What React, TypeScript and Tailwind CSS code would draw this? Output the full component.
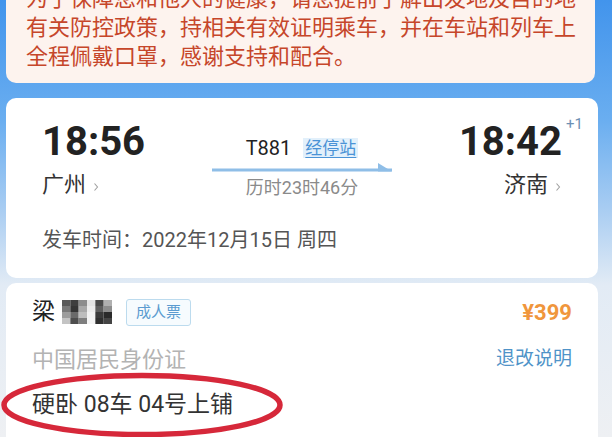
import React from 'react';

const font = { fontFamily: 'Roboto, "Noto Sans CJK SC", sans-serif' };

// pixelated name cover
const mosaic = [
  ['#5a5a5a', '#3e3e3e', '#8c8c8c', '#e4e4e4', '#4a4a4a', '#b0b0b0'],
  ['#7a7a7a', '#353535', '#a8a8a8', '#ececec', '#5e5e5e', '#8d8d8d'],
  ['#9d9d9d', '#6a6a6a', '#bdbdbd', '#f2f2f2', '#3a3a3a', '#2a2a2a'],
  ['#c4c4c4', '#4e4e4e', '#7e7e7e', '#f4f4f4', '#2f2f2f', '#444444'],
];

const Mosaic: React.FC = () => (
  <svg width="50" height="24" viewBox="0 0 48 24" preserveAspectRatio="none" className="shrink-0">
    {mosaic.map((row, r) =>
      row.map((c, i) => <rect key={`${r}-${i}`} x={i * 8} y={r * 6} width="8" height="6" fill={c} />)
    )}
  </svg>
);

const Chevron: React.FC = () => (
  <svg width="8" height="12" viewBox="0 0 8 12" className="ml-[6px] mt-[4px]">
    <path d="M2.5 2.5 L5.5 6 L2.5 9.5" fill="none" stroke="#a0a0a0" strokeWidth="1.1" />
  </svg>
);

const App: React.FC = () => {
  return (
    <div
      className="w-[612px] h-[437px] overflow-hidden bg-[linear-gradient(to_bottom,#4294ec_0px,#6aaef0_120px,#a9cdf2_210px,#e2ebf5_285px,#eef0f3_437px)]"
      style={font}
    >
      {/* notice */}
      <div className="ml-[6px] mr-[17px] -mt-[30px] pt-[14px] pb-[12px] pl-[20px] pr-3 rounded-[10px] bg-[#fdf3ee] text-[22px] leading-[29px] text-[#c6462a]">
        <p className="whitespace-nowrap">为了保障您和他人的健康，请您提前了解出发地及目的地</p>
        <p className="whitespace-nowrap">有关防控政策，持相关有效证明乘车，并在车站和列车上</p>
        <p>全程佩戴口罩，感谢支持和配合。</p>
      </div>

      {/* train */}
      <div className="ml-[6px] mr-[14px] mt-[15px] rounded-[10px] bg-white px-[36px] pt-[24px] pb-[24px]">
        <div className="flex justify-between">
          <div className="flex flex-col">
            <div className="text-[40px] leading-[40px] font-bold text-[#222]">18:56</div>
            <div className="mt-[9px] flex items-center text-[22px] leading-[28px] text-[#333]">
              广州
              <Chevron />
            </div>
          </div>

          <div className="mt-[14px] flex flex-col items-center">
            <div className="flex items-center h-6">
              <span className="text-[20px] text-[#222]">T881</span>
              <span className="ml-[12px] px-[2px] bg-[#e2f0fb] text-[17px] leading-[20px] text-[#4a93d6] underline underline-offset-[3px]">
                经停站
              </span>
            </div>
            <svg width="180" height="16" viewBox="0 0 180 16">
              <rect x="0" y="8.5" width="180" height="3" fill="#8fbee7" />
              <polygon points="166,3 180,11.5 166,11.5" fill="#8fbee7" />
            </svg>
            <div className="h-6 text-[18px] leading-6 text-[#8a8a8a]">历时23时46分</div>
          </div>

          <div className="flex flex-col items-end">
            <div className="relative text-[40px] leading-[40px] font-bold text-[#222]">
              18:42
              <span className="absolute -right-[21px] -top-[6px] text-[15px] leading-[16px] font-normal text-[#6d8fb3]">+1</span>
            </div>
            <div className="mt-[9px] flex items-center text-[22px] leading-[28px] text-[#333]">
              济南
              <Chevron />
            </div>
          </div>
        </div>
        <div className="mt-[26px] text-[20px] leading-[28px] text-[#555]">发车时间：2022年12月15日 周四</div>
      </div>

      {/* passenger */}
      <div className="relative ml-[6px] mr-[14px] mt-[5px] h-[200px] rounded-t-[10px] bg-white pl-[26px] pr-[26px] pt-[13px]">
        <div className="flex items-center justify-between h-8">
          <div className="flex items-center">
            <span className="text-[23px] text-[#222]">梁</span>
            <span className="ml-[7px]">
              <Mosaic />
            </span>
            <span className="ml-[14px] h-[27px] px-[9px] flex items-center rounded-[3px] border border-[#bcdbee] bg-[#f6fbfe] text-[15px] text-[#5b9bd0]">
              成人票
            </span>
          </div>
          <span className="text-[22px] font-bold text-[#f0963c]">¥399</span>
        </div>
        <div className="mt-[15px] flex items-center justify-between h-8">
          <span className="text-[22px] text-[#b3b3b3]">中国居民身份证</span>
          <span className="text-[19px] text-[#4f93c8]">退改说明</span>
        </div>
        <div className="mt-[14px] h-8 flex items-center text-[23px] text-[#333]">硬卧 08车 04号上铺</div>

        <svg
          className="absolute -left-[6px] top-[89px]"
          width="286"
          height="66"
          viewBox="0 0 286 66"
        >
          <ellipse cx="142" cy="33" rx="138" ry="29.5" fill="none" stroke="#d6283a" strokeWidth="5.5" />
        </svg>
      </div>
    </div>
  );
};

export default App;
